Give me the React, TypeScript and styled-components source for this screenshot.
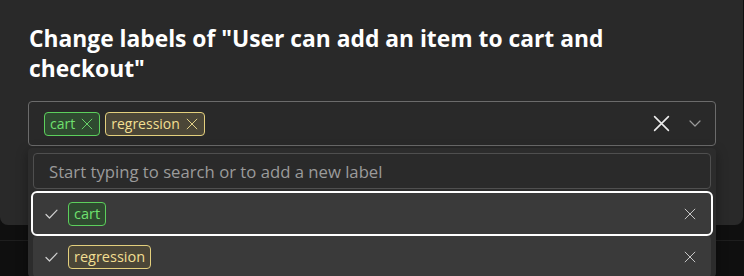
import React from "react";
import styled, { createGlobalStyle } from "styled-components";

const Global = createGlobalStyle`
  html, body { margin: 0; padding: 0; background: #0f0f0f; }
  body { font-family: "Open Sans", "Noto Sans", sans-serif; }
  * { box-sizing: border-box; }
`;

const Page = styled.div`
  position: relative;
  width: 744px;
  height: 276px;
  overflow: hidden;
  background: #0f0f0f;
`;

const Backdrop = styled.div`
  position: absolute;
  left: 0;
  top: 240px;
  width: 744px;
  height: 1px;
  background: #1e1e1e;
`;

const Modal = styled.div`
  position: relative;
  width: 743px;
  height: 225px;
  background: #292929;
  border-radius: 0 0 8px 8px;
  padding: 24px 28px 0 28px;
`;

const Title = styled.h2`
  margin: 0 0 17px 1px;
  max-width: 630px;
  font-size: 22.8px;
  line-height: 30px;
  font-weight: 700;
  color: #ffffff;
`;

const Field = styled.div`
  position: relative;
  width: 688px;
`;

const Control = styled.div`
  display: flex;
  align-items: center;
  height: 45px;
  border: 1px solid #6b6b6b;
  border-radius: 4px;
  padding: 0 14px 0 15px;
  gap: 5px;
`;

const ChipRow = styled.div`
  display: flex;
  gap: 5px;
  flex: 1;
`;

const Chip = styled.span<{ $tone: "green" | "yellow" }>`
  display: inline-flex;
  align-items: center;
  gap: 6px;
  height: 24px;
  padding: 0 6px 0 5px;
  border-radius: 4px;
  font-size: 14px;
  border: 1px solid ${(p) => (p.$tone === "green" ? "#5ccf5c" : "#e3cf7d")};
  background: ${(p) => (p.$tone === "green" ? "#2f4a30" : "#4b4637")};
  color: ${(p) => (p.$tone === "green" ? "#6fe06f" : "#f2df92")};
`;

const Indicators = styled.div`
  display: flex;
  align-items: center;
  gap: 19px;
  color: #e6e6e6;
`;

const Popover = styled.div`
  position: absolute;
  left: 0;
  top: 47px;
  width: 688px;
  background: #2c2c2c;
  border-radius: 4px;
  padding: 5px 5px 0 5px;
  display: flex;
  flex-direction: column;
  gap: 2px;
  box-shadow: 0 4px 12px rgba(0, 0, 0, 0.35);
`;

const Search = styled.div`
  height: 36px;
  border: 1px solid #4f4f4f;
  border-radius: 4px;
  background: #2a2a2a;
  display: flex;
  align-items: center;
  padding-left: 15px;
  font-size: 16.7px;
  color: #9b9b9b;
  margin-bottom: 2px;
`;

const Option = styled.div<{ $focused?: boolean }>`
  height: 41px;
  display: flex;
  align-items: center;
  padding: 0 15px 0 12px;
  gap: 10px;
  background: #3a3a3a;
  border-radius: 4px;
  ${(p) => (p.$focused ? "outline: 2px solid #ffffff; outline-offset: 0px;" : "")}
`;

const OptionChip = styled(Chip)`
  padding: 0 5px;
  font-size: 14.5px;
`;

const Spacer = styled.div`
  flex: 1;
`;

const IconX = ({ size, stroke, color }: { size: number; stroke: number; color: string }) => (
  <svg width={size} height={size} viewBox="0 0 16 16" fill="none">
    <path d="M1.5 1.5 L14.5 14.5 M14.5 1.5 L1.5 14.5" stroke={color} strokeWidth={stroke} strokeLinecap="round" />
  </svg>
);

const Check = () => (
  <svg width="13" height="10" viewBox="0 0 13 10" fill="none">
    <path d="M1 5.5 L4.5 9 L12 1.2" stroke="#cfcfcf" strokeWidth="1.2" strokeLinecap="round" strokeLinejoin="round" />
  </svg>
);

const Chevron = () => (
  <svg width="12" height="7" viewBox="0 0 12 7" fill="none">
    <path d="M1 1 L6 6 L11 1" stroke="#9a9a9a" strokeWidth="1.2" strokeLinecap="round" strokeLinejoin="round" />
  </svg>
);

export default function App() {
  return (
    <Page>
      <Global />
      <Backdrop />
      <Modal>
        <Title>Change labels of "User can add an item to cart and checkout"</Title>
        <Field>
          <Control>
            <ChipRow>
              <Chip $tone="green">
                cart
                <IconX size={12} stroke={1.2} color="#6fe06f" />
              </Chip>
              <Chip $tone="yellow">
                regression
                <IconX size={12} stroke={1.2} color="#f2df92" />
              </Chip>
            </ChipRow>
            <Indicators>
              <IconX size={17} stroke={1.5} color="#ececec" />
              <Chevron />
            </Indicators>
          </Control>
          <Popover>
            <Search>Start typing to search or to add a new label</Search>
            <Option $focused>
              <Check />
              <OptionChip $tone="green">cart</OptionChip>
              <Spacer />
              <IconX size={12} stroke={1.2} color="#d6d6d6" />
            </Option>
            <Option>
              <Check />
              <OptionChip $tone="yellow">regression</OptionChip>
              <Spacer />
              <IconX size={12} stroke={1.2} color="#d6d6d6" />
            </Option>
          </Popover>
        </Field>
      </Modal>
    </Page>
  );
}
